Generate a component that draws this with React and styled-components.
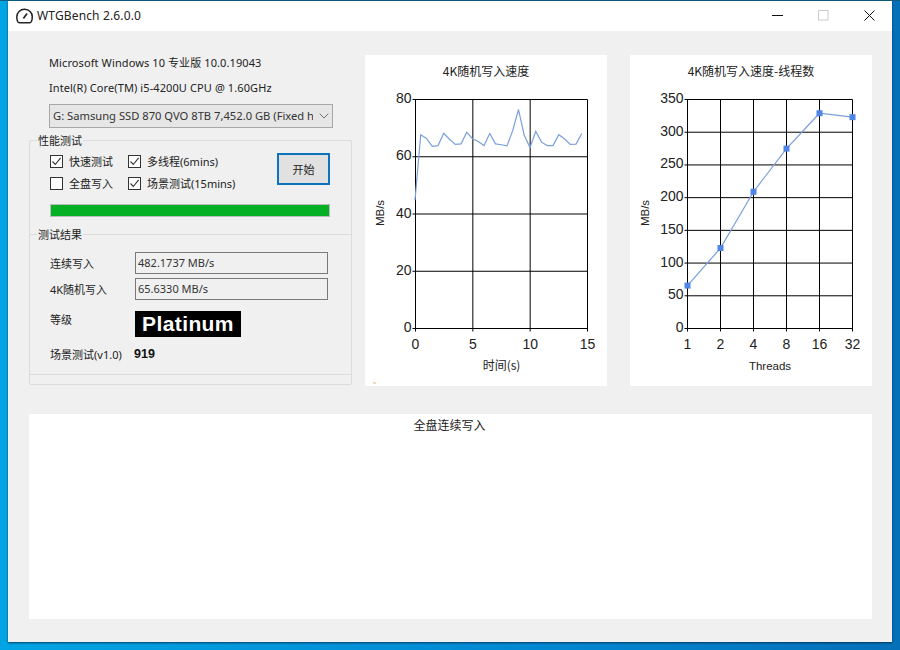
import React from 'react';
import styled, { createGlobalStyle } from 'styled-components';
import { ChevronDown } from 'lucide-react';

const GlobalStyle = createGlobalStyle`
  html, body {
    margin: 0;
    width: 900px;
    height: 650px;
    overflow: hidden;
  }
  body {
    background: linear-gradient(90deg, #02a4e4 0%, #0288d2 60%, #0470b8 100%);
    font-family: "Noto Sans", "Noto Sans CJK SC", sans-serif;
    font-size: 12px;
    color: #1a1a1a;
  }
`;

const Desktop = styled.div`
  width: 900px;
  height: 650px;
  padding: 1px 8px 8px;
  box-sizing: border-box;
  background: linear-gradient(180deg, #0f5c80 0, #0f5c80 1px, transparent 1px);
`;

const Window = styled.div`
  width: 884px;
  height: 641px;
  background: #f0f0f0;
  box-shadow: 0 1px 2px rgba(0, 30, 60, 0.75);
  display: flex;
  flex-direction: column;
`;

const TitleBar = styled.div`
  height: 30px;
  flex: none;
  background: #fff;
  display: flex;
  align-items: center;
  padding-left: 8px;
`;

const AppTitle = styled.span`
  margin-left: 4px;
  padding-bottom: 2px;
  font-size: 12px;
  letter-spacing: 0.15px;
  color: #222;
`;

const WindowButtons = styled.div`
  margin-left: auto;
  margin-top: -2px;
  display: flex;
`;

const WindowButton = styled.div`
  width: 46px;
  height: 30px;
  display: flex;
  align-items: center;
  justify-content: center;
`;

const Body = styled.div`
  flex: 1;
  padding: 24px 20px 23px 21px;
  display: flex;
  flex-direction: column;
  gap: 28px;
`;

const TopRow = styled.div`
  display: flex;
  height: 331px;
`;

const LeftColumn = styled.div`
  width: 323px;
  flex: none;
  display: flex;
  flex-direction: column;
`;

const InfoLine = styled.div`
  height: 24.5px;
  line-height: 16px;
  padding-left: 20px;
  font-size: 11px;
  letter-spacing: 0.1px;
  color: #222;
`;

const Combo = styled.div`
  width: 284px;
  height: 24px;
  margin: 0 0 12px 20px;
  box-sizing: border-box;
  border: 1px solid #a8a8a8;
  background: #e6e6e6;
  display: flex;
  align-items: center;
  padding: 0 0 0 3px;
  font-size: 11.2px;
  color: #333;
`;

const ComboText = styled.span`
  flex: 1;
  margin-right: 3px;
  padding-bottom: 2px;
  overflow: hidden;
  white-space: nowrap;
`;

const Group = styled.div`
  position: relative;
  box-sizing: border-box;
  border: 1px solid #dcdcdc;
  border-radius: 2px;
`;

const OuterGroup = styled(Group)`
  height: 245px;
  padding-top: 9px;
`;

const ResultGroup = styled(Group)`
  margin: 0 -1px;
  height: 141px;
  padding: 15px 0 0 20px;
`;

const GroupLabel = styled.span`
  position: absolute;
  top: -7px;
  left: 7px;
  padding: 0 1px;
  background: #f0f0f0;
  font-size: 11px;
  line-height: 14px;
  color: #222;
`;

const OptionsRow = styled.div`
  display: flex;
  padding-left: 20px;
`;

const OptionGrid = styled.div`
  display: grid;
  grid-template-columns: 78px 144px;
  grid-auto-rows: 22px;
  align-items: center;
`;

const Option = styled.label`
  display: flex;
  align-items: center;
  gap: 6px;
  font-size: 11px;
  color: #222;
`;

const Box = styled.span`
  width: 11px;
  height: 11px;
  border: 1px solid #333;
  background: #fff;
  flex: none;
  display: flex;
  align-items: center;
  justify-content: center;
`;

const StartButton = styled.div`
  width: 53px;
  height: 32px;
  margin-left: 5px;
  margin-top: 3px;
  box-sizing: border-box;
  border: 2px solid #0f72bc;
  background: #e1e1e1;
  display: flex;
  align-items: center;
  justify-content: center;
  font-size: 11px;
  color: #222;
`;

const ProgressTrack = styled.div`
  width: 280px;
  height: 13px;
  margin: 10px 0 17px 20px;
  box-sizing: border-box;
  border: 1px solid #bcbcbc;
  background: #e6e6e6;
`;

const ProgressFill = styled.div`
  height: 100%;
  background: #06b025;
`;

const ResultRow = styled.div`
  display: flex;
  align-items: center;
  height: 26px;
`;

const ResultLabel = styled.span`
  width: 85px;
  flex: none;
  font-size: 11px;
  color: #222;
`;

const ResultValue = styled.div`
  width: 193px;
  height: 22px;
  box-sizing: border-box;
  border: 1px solid #7a7a7a;
  background: #f0f0f0;
  padding-left: 2px;
  line-height: 20px;
  font-size: 11px;
  color: #333;
`;

const GradeRow = styled.div`
  display: flex;
  height: 33px;
  margin-top: 9px;
`;

const GradeBadge = styled.div`
  width: 106px;
  height: 26px;
  background: #000;
  color: #fff;
  font-family: "Liberation Sans", Arial, sans-serif;
  font-weight: 700;
  font-size: 21px;
  line-height: 26px;
  text-align: center;
  letter-spacing: 0.4px;
`;

const ScoreRow = styled.div`
  display: flex;
  align-items: center;
  margin-top: 2px;
`;

const Score = styled.span`
  margin-left: -1px;
  font-family: "Liberation Sans", Arial, sans-serif;
  font-weight: 700;
  font-size: 12.5px;
  color: #111;
`;

const ChartPanel = styled.div`
  width: 242px;
  height: 331px;
  flex: none;
  background: #fff;
  margin-left: ${(p) => p.$gap}px;
`;

const WidePanel = styled.div`
  height: 205px;
  background: #fff;
  text-align: center;
  font-size: 12px;
  line-height: 24px;
  padding-right: 2px;
  color: #222;
`;

const ChartSvg = styled.svg`
  display: block;
`;

const axisFont = '"Liberation Sans", Arial, sans-serif';
const labelFont = '"Noto Sans CJK SC", "Noto Sans", sans-serif';

const speed = [44.8, 67.7, 66.4, 63.6, 63.9, 68.2, 66.1, 64.3, 64.5, 68.5, 66.3, 65.3, 63.9, 68.1, 64.5, 64.2, 63.8, 69.2, 76.5, 67.5, 63.2, 68.9, 65.1, 63.9, 63.9, 67.7, 66.3, 64.3, 64.4, 68.1];
const threads = [65.6, 123, 209, 275, 329, 323];

const LineChart = ({ title, xTitle, left, xLabels, yMax, yStep, points, markers, speck, xTitleFont, xTitleSize }) => {
  const top = 44.5;
  const bottom = 273.5;
  const right = 222.5;
  const x = (i) => left + (i / (xLabels.length - 1)) * (right - left);
  const y = (v) => bottom - (v / yMax) * (bottom - top);
  const yTicks = [];
  for (let v = 0; v <= yMax; v += yStep) yTicks.push(v);
  const line = points.map(([px, v]) => `${px},${y(v)}`).join(' ');

  return (
    <ChartSvg width="242" height="331" viewBox="0 0 242 331">
      <text x="121" y="21" textAnchor="middle" fontSize="12" fontFamily={labelFont} fill="#222">{title}</text>
      {xLabels.map((label, i) => (
        <g key={label}>
          <line x1={x(i)} x2={x(i)} y1={top} y2={bottom + 3} stroke="#000" />
          <text x={x(i)} y={bottom + 20} textAnchor="middle" fontSize="14" fontFamily={axisFont} fill="#222">{label}</text>
        </g>
      ))}
      {yTicks.map((v) => (
        <g key={v}>
          <line x1={left - 3} x2={right} y1={y(v)} y2={y(v)} stroke="#000" />
          <text x={left - 4} y={y(v) + 3.5} textAnchor="end" fontSize="14" fontFamily={axisFont} fill="#222">{v}</text>
        </g>
      ))}
      <text transform="translate(19 158) rotate(-90)" textAnchor="middle" fontSize="11.5" fontFamily={axisFont} fill="#222">MB/s</text>
      <text x={(left + right) / 2} y="315" textAnchor="middle" fontSize={xTitleSize} fontFamily={xTitleFont} fill="#222">{xTitle}</text>
      <polyline points={line} fill="none" stroke="#7b9fdc" strokeWidth="1.2" />
      {markers && points.map(([px, v]) => (
        <rect key={px} x={px - 3} y={y(v) - 3} width="6" height="6" fill="#4f86e6" />
      ))}
      {speck && <line x1="8" x2="11" y1="328" y2="328" stroke="#e2b46a" />}
    </ChartSvg>
  );
};

const GaugeIcon = () => (
  <svg width="17" height="16" viewBox="0 0 17 16" fill="none" stroke="#222" strokeWidth="1.5">
    <path d="M3.4 14.7h10.2c1 0 1.5-.6 1.9-1.5.4-1 .7-2.1.7-3.3A7.7 7.7 0 0 0 8.5 1.2 7.7 7.7 0 0 0 .8 8.9c0 1.4.3 3.2.7 4.3.4.9.9 1.5 1.9 1.5z" />
    <path d="M7.4 10.4 11 5.6" strokeWidth="1.7" />
  </svg>
);

const Tick = () => (
  <svg width="11" height="11" viewBox="0 0 11 11" fill="none" stroke="#333" strokeWidth="1.1">
    <path d="M1.5 5.5 4.3 8.5 9.6 1.8" />
  </svg>
);

const Check = ({ checked, children }) => (
  <Option>
    <Box>{checked && <Tick />}</Box>
    {children}
  </Option>
);

export default function App() {
  const timeLabels = ['0', '5', '10', '15'];
  const speedPoints = speed.map((v, i) => [50 + (i * 172.5) / 30, v]);
  const threadLabels = ['1', '2', '4', '8', '16', '32'];
  const threadPoints = threads.map((v, i) => [57.5 + i * 33, v]);

  return (
    <>
      <GlobalStyle />
      <Desktop>
        <Window>
          <TitleBar>
            <GaugeIcon />
            <AppTitle>WTGBench 2.6.0.0</AppTitle>
            <WindowButtons>
              <WindowButton>
                <svg width="11" height="11" viewBox="0 0 11 11"><path d="M0 5.5h11" stroke="#111" /></svg>
              </WindowButton>
              <WindowButton>
                <svg width="11" height="11" viewBox="0 0 11 11"><rect x=".5" y=".5" width="9.5" height="9.5" fill="none" stroke="#ccc" /></svg>
              </WindowButton>
              <WindowButton>
                <svg width="11" height="11" viewBox="0 0 11 11"><path d="M.5.5l10 10M10.5.5l-10 10" stroke="#111" /></svg>
              </WindowButton>
            </WindowButtons>
          </TitleBar>
          <Body>
            <TopRow>
              <LeftColumn>
                <InfoLine>Microsoft Windows 10 专业版 10.0.19043</InfoLine>
                <InfoLine>Intel(R) Core(TM) i5-4200U CPU @ 1.60GHz</InfoLine>
                <Combo>
                  <ComboText>G: Samsung SSD 870 QVO 8TB 7,452.0 GB (Fixed hard disk)</ComboText>
                  <ChevronDown size={16} strokeWidth={1.1} color="#444" />
                </Combo>
                <OuterGroup>
                  <GroupLabel>性能测试</GroupLabel>
                  <OptionsRow>
                    <OptionGrid>
                      <Check checked>快速测试</Check>
                      <Check checked>多线程(6mins)</Check>
                      <Check>全盘写入</Check>
                      <Check checked>场景测试(15mins)</Check>
                    </OptionGrid>
                    <StartButton>开始</StartButton>
                  </OptionsRow>
                  <ProgressTrack>
                    <ProgressFill />
                  </ProgressTrack>
                  <ResultGroup>
                    <GroupLabel>测试结果</GroupLabel>
                    <ResultRow>
                      <ResultLabel>连续写入</ResultLabel>
                      <ResultValue>482.1737 MB/s</ResultValue>
                    </ResultRow>
                    <ResultRow>
                      <ResultLabel>4K随机写入</ResultLabel>
                      <ResultValue>65.6330 MB/s</ResultValue>
                    </ResultRow>
                    <GradeRow>
                      <ResultLabel>等级</ResultLabel>
                      <GradeBadge>Platinum</GradeBadge>
                    </GradeRow>
                    <ScoreRow>
                      <ResultLabel>场景测试(v1.0)</ResultLabel>
                      <Score>919</Score>
                    </ScoreRow>
                  </ResultGroup>
                </OuterGroup>
              </LeftColumn>
              <ChartPanel $gap={13}>
                <LineChart
                  title="4K随机写入速度"
                  xTitle="时间(s)"
                  left={50.5}
                  xLabels={timeLabels}
                  yMax={80}
                  yStep={20}
                  points={speedPoints}
                  speck
                  xTitleFont={labelFont}
                  xTitleSize={12}
                />
              </ChartPanel>
              <ChartPanel $gap={23}>
                <LineChart
                  title="4K随机写入速度-线程数"
                  xTitle="Threads"
                  left={57.5}
                  xLabels={threadLabels}
                  yMax={350}
                  yStep={50}
                  points={threadPoints}
                  markers
                  xTitleFont={axisFont}
                  xTitleSize={11.5}
                />
              </ChartPanel>
            </TopRow>
            <WidePanel>全盘连续写入</WidePanel>
          </Body>
        </Window>
      </Desktop>
    </>
  );
}
